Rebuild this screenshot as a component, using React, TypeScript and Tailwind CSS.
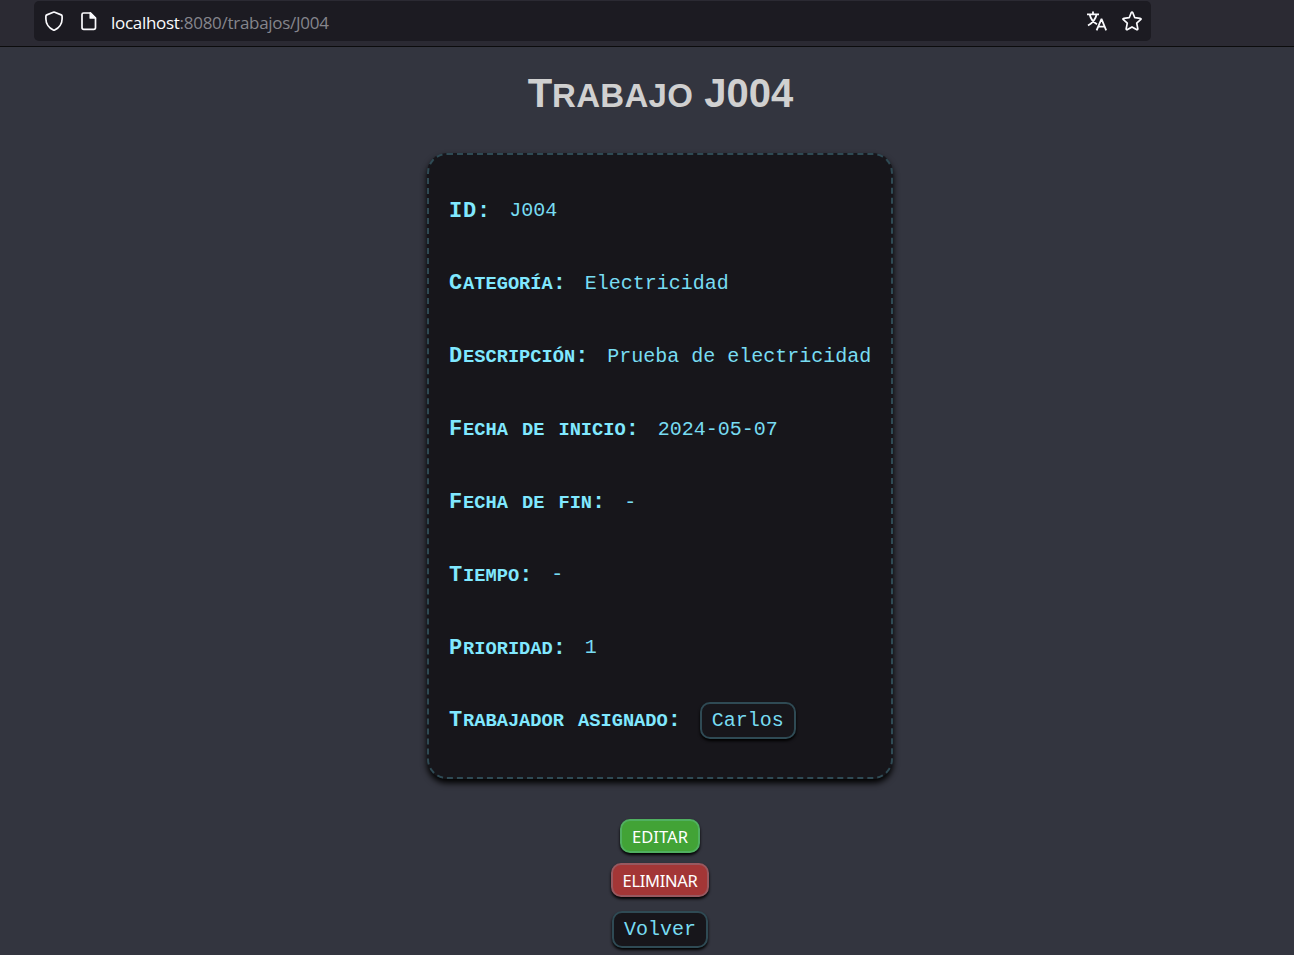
import React from "react";

const mono = "font-['Liberation_Mono',monospace]";

/* Small capitals: lower-case runs become reduced capitals, spaces keep the full width. */
function SmallCaps({ text, small }: { text: string; small: string }) {
  return (
    <>
      {text.split(/([a-zíó]+)/).map((part, i) =>
        i % 2 ? (
          <span key={i} className={`uppercase ${small}`}>{part}</span>
        ) : (
          part
        ),
      )}
    </>
  );
}

const rows = [
  ["ID:", "J004"],
  ["Categoría:", "Electricidad"],
  ["Descripción:", "Prueba de electricidad"],
  ["Fecha de inicio:", "2024-05-07"],
  ["Fecha de fin:", "-"],
  ["Tiempo:", "-"],
  ["Prioridad:", "1"],
];

function Label({ text }: { text: string }) {
  return (
    <h3 className="mr-[18px] whitespace-pre text-[22px] font-bold leading-[27px] tracking-[0.84px]">
      <SmallCaps text={text} small="text-[18.7px] tracking-normal" />
    </h3>
  );
}

const linkClass =
  "flex h-[37px] w-24 items-center justify-center rounded-[10px] border-2 border-[#2f4a54] bg-[#17161b] text-[20px] text-[#78dcf2] shadow-[0_2px_3px_#000]";

const buttonClass =
  "h-[34px] rounded-[10px] border-2 pt-px font-['Noto_Sans',sans-serif] text-[16.5px] leading-[27px] text-white shadow-[0_2px_3px_#000]";

export default function App() {
  return (
    <div className="flex h-[955px] w-[1294px] flex-col overflow-hidden bg-[#33353f]">
      <header className="h-[47px] shrink-0 border-b border-[#0c0c0d] bg-[#2b2a33] pl-[34px] pt-px">
        <div className="flex h-10 w-[1117px] items-center rounded-[5px] bg-[#1c1b22] text-[#fbfbfe]">
          <svg className="ml-2.5 h-5 w-5" viewBox="0 0 20 20" fill="none" stroke="currentColor" strokeWidth="1.7" strokeLinejoin="round">
            <path d="M9.300 1.200Q10 .9 10.700 1.200L17.200 3.900Q18.100 4.300 18.100 5.300V8C18.100 12.500 15 17 10.700 19Q10 19.300 9.300 19C5 17 1.900 12.500 1.900 8V5.300Q1.900 4.300 2.800 3.900Z" />
          </svg>
          <svg className="ml-[15px] h-5 w-5" viewBox="0 0 20 20" fill="none" stroke="currentColor" strokeWidth="1.7" strokeLinejoin="round">
            <path d="M4.500 2h7l5 5v9.500a1.800 1.800 0 0 1-1.800 1.800H4.800A1.800 1.800 0 0 1 3 16.500v-13A1.500 1.500 0 0 1 4.500 2Z" />
            <path d="M11.300 2v5h5Z" fill="currentColor" />
          </svg>
          <span className="ml-3 mt-1 whitespace-pre font-['Open_Sans',sans-serif] text-[17px] tracking-[-0.29px] text-[#85858c]">
            <span className="text-[#fbfbfe]">localhost</span>:8080/trabajos/J004
          </span>
          <svg className="ml-auto h-5 w-5" viewBox="0 0 20 20" fill="none" stroke="currentColor" strokeWidth="1.8">
            <path d="M0 3.300h12M6 .5v3M2.700 3.500C3.700 8 6.500 11.300 10 13.200M9.600 3.500C8.600 8 5.500 12 1 14.500M9.600 19.300l4.700-11h.4l4.500 11M11 15.700h7" />
          </svg>
          <svg className="ml-[15px] mr-[9px] h-5 w-5" viewBox="0 0 20 20" fill="none" stroke="currentColor" strokeWidth="1.7" strokeLinejoin="round">
            <path d="M9.200 1.800Q10 .5 10.800 1.800L12.800 6.700 18.100 7.300Q19.700 7.600 18.600 8.700L14.700 12.200 15.800 17.600Q15.900 19.200 14.500 18.600L10 15.900 5.500 18.600Q4.100 19.200 4.200 17.600L5.300 12.200 1.400 8.700Q.3 7.600 1.900 7.300L7.200 6.700Z" />
          </svg>
        </div>
      </header>
      <main className={`flex flex-col items-center pl-[26px] ${mono}`}>
        <h1 className="mt-[23px] h-[46px] whitespace-pre pl-px font-['Liberation_Sans',sans-serif] text-[40px] font-bold leading-[46px] text-[#d0d0d0]">
          <SmallCaps text="Trabajo J004" small="text-[33px] tracking-[0.3px]" />
        </h1>
        <section className="mt-[37px] flex h-[626px] w-[466px] shrink-0 flex-col rounded-[20px] border-2 border-dashed border-[#2f4a54] bg-[#17161b] pl-5 pt-5 text-[#80e8ff] shadow-[0_4px_6px_#000]">
          {rows.map(([label, value]) => (
            <div key={label} className="flex h-[72.9px] items-center">
              <Label text={label} />
              <span className="whitespace-pre pb-px text-[20px] text-[#78dcf2]">{value}</span>
            </div>
          ))}
          <div className="flex h-[71px] items-center">
            <Label text="Trabajador asignado:" />
            <a className={linkClass}>Carlos</a>
          </div>
        </section>
        <button className={`mt-10 w-20 border-[#50b060] bg-[#42a336] tracking-[0.1px] ${buttonClass}`}>
          EDITAR
        </button>
        <button className={`mt-2.5 w-[98px] border-[#98585f] bg-[#a33636] tracking-[-0.3px] ${buttonClass}`}>
          ELIMINAR
        </button>
        <a className={`mt-3.5 ${linkClass}`}>Volver</a>
      </main>
    </div>
  );
}
